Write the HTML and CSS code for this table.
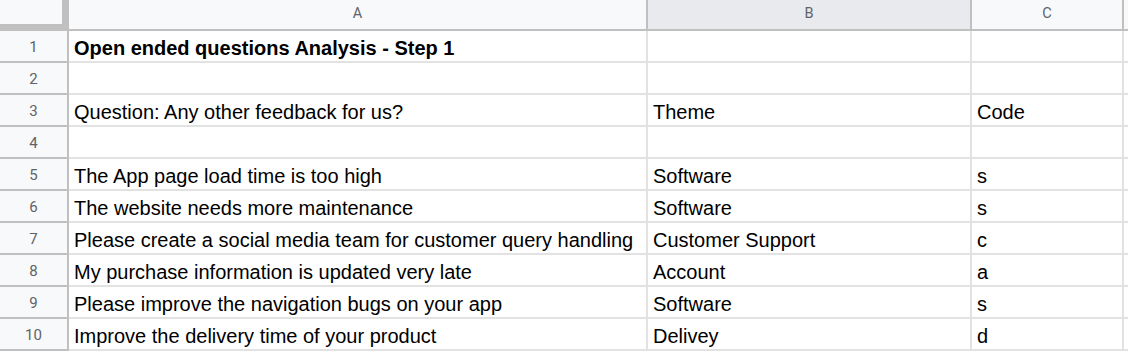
FILE: index.html
```html
<!DOCTYPE html>
<html>
<head>
<meta charset="utf-8">
<link rel="stylesheet" href="styles.css">
</head>
<body>
<div class="sheet">
  <div class="corner"></div>
  <div class="colhead">A</div>
  <div class="colhead sel">B</div>
  <div class="colhead">C</div>
  <div class="colhead extra"></div>

  <div class="rowhead">1</div>
  <div class="cell bold">Open ended questions Analysis - Step 1</div>
  <div class="cell"></div>
  <div class="cell"></div>
  <div class="cell extra"></div>

  <div class="rowhead">2</div>
  <div class="cell"></div>
  <div class="cell"></div>
  <div class="cell"></div>
  <div class="cell extra"></div>

  <div class="rowhead">3</div>
  <div class="cell">Question: Any other feedback for us?</div>
  <div class="cell">Theme</div>
  <div class="cell">Code</div>
  <div class="cell extra"></div>

  <div class="rowhead">4</div>
  <div class="cell"></div>
  <div class="cell"></div>
  <div class="cell"></div>
  <div class="cell extra"></div>

  <div class="rowhead">5</div>
  <div class="cell">The App page load time is too high</div>
  <div class="cell">Software</div>
  <div class="cell">s</div>
  <div class="cell extra"></div>

  <div class="rowhead">6</div>
  <div class="cell">The website needs more maintenance</div>
  <div class="cell">Software</div>
  <div class="cell">s</div>
  <div class="cell extra"></div>

  <div class="rowhead">7</div>
  <div class="cell">Please create a social media team for customer query handling</div>
  <div class="cell">Customer Support</div>
  <div class="cell">c</div>
  <div class="cell extra"></div>

  <div class="rowhead">8</div>
  <div class="cell">My purchase information is updated very late</div>
  <div class="cell">Account</div>
  <div class="cell">a</div>
  <div class="cell extra"></div>

  <div class="rowhead">9</div>
  <div class="cell">Please improve the navigation bugs on your app</div>
  <div class="cell">Software</div>
  <div class="cell">s</div>
  <div class="cell extra"></div>

  <div class="rowhead">10</div>
  <div class="cell">Improve the delivery time of your product</div>
  <div class="cell">Delivey</div>
  <div class="cell">d</div>
  <div class="cell extra"></div>
</div>
</body>
</html>
```

FILE: styles.css
```css
html, body {
  margin: 0;
  padding: 0;
  background: #ffffff;
}

.sheet {
  display: grid;
  grid-template-columns: 69px 579px 324px 152px 1fr;
  grid-template-rows: 31px repeat(10, 32px);
  width: 1128px;
  height: 351px;
  overflow: hidden;
}

.sheet > div {
  box-sizing: border-box;
  min-width: 0;
  overflow: hidden;
  white-space: nowrap;
}

.corner {
  background: #f8f9fa;
  border-right: 7px solid #c0c0c0;
  border-bottom: 7px solid #c0c0c0;
}

.colhead {
  background: #f8f9fa;
  border-right: 2px solid #c0c0c0;
  border-bottom: 2px solid #c0c0c0;
  display: flex;
  align-items: center;
  justify-content: center;
  font-family: Roboto, "Liberation Sans", sans-serif;
  font-size: 14.5px;
  color: #5f6368;
  padding-bottom: 2px;
}

.colhead.sel {
  background: #e8eaed;
}

.colhead.extra {
  border-right: none;
}

.rowhead {
  background: #f8f9fa;
  border-right: 2px solid #c0c0c0;
  border-bottom: 2px solid #c0c0c0;
  display: flex;
  align-items: center;
  justify-content: center;
  font-family: Roboto, "Liberation Sans", sans-serif;
  font-size: 15px;
  color: #5f6368;
  padding-top: 2px;
}

.cell {
  border-right: 2px solid #e2e2e2;
  border-bottom: 2px solid #e2e2e2;
  display: flex;
  align-items: flex-end;
  padding: 0 5px 1px 5px;
  font-family: "Liberation Sans", Arial, sans-serif;
  font-size: 20px;
  line-height: 23px;
  color: #000000;
}

.cell.extra {
  border-right: none;
}

.bold {
  font-weight: bold;
}
```
